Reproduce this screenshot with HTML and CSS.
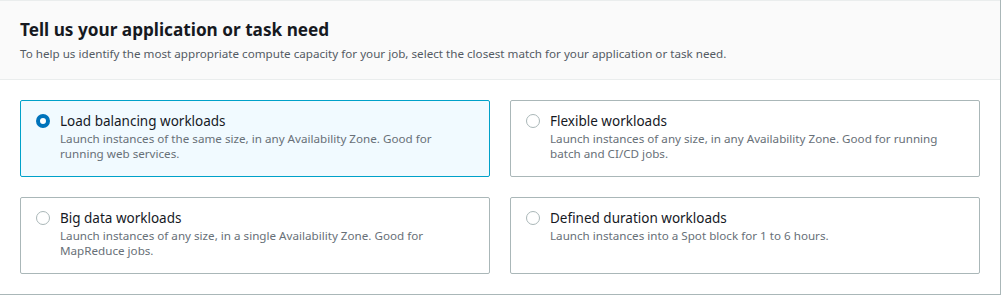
FILE: index.html
```html
<!DOCTYPE html>
<html lang="en">
<head>
<meta charset="UTF-8" />
<title>Application or task need</title>
<link rel="stylesheet" href="styles.css">
</head>
<body>
<div class="panel">
  <div class="panel-header">
    <h2 class="panel-title">Tell us your application or task need</h2>
    <p class="panel-desc">To help us identify the most appropriate compute capacity for your job, select the closest match for your application or task need.</p>
  </div>

  <div class="tiles">
    <label class="tile selected">
      <span class="radio checked"></span>
      <span class="tile-text">
        <span class="tile-title">Load balancing workloads</span>
        <span class="tile-desc">Launch instances of the same size, in any Availability Zone. Good for running web services.</span>
      </span>
    </label>
    <label class="tile">
      <span class="radio"></span>
      <span class="tile-text">
        <span class="tile-title">Flexible workloads</span>
        <span class="tile-desc">Launch instances of any size, in any Availability Zone. Good for running batch and CI/CD jobs.</span>
      </span>
    </label>
    <label class="tile">
      <span class="radio"></span>
      <span class="tile-text">
        <span class="tile-title">Big data workloads</span>
        <span class="tile-desc">Launch instances of any size, in a single Availability Zone. Good for MapReduce jobs.</span>
      </span>
    </label>
    <label class="tile">
      <span class="radio"></span>
      <span class="tile-text">
        <span class="tile-title">Defined duration workloads</span>
        <span class="tile-desc">Launch instances into a Spot block for 1 to 6 hours.</span>
      </span>
    </label>
  </div>
</div>
</body>
</html>
```

FILE: styles.css
```css
body {
  margin: 0;
  background-color: #fff;
  font-family: 'Noto Sans', 'Open Sans', sans-serif;
  color: #16191f;
}

.panel {
  width: 1001px;
  height: 295px;
  box-sizing: border-box;
  border-right: 1px solid #aab7b8;
  border-bottom: 1px solid #aab7b8;
  background-color: #fff;
}

.panel-header {
  background-color: #fafafa;
  border-top: 1px solid #eaeded;
  border-bottom: 1px solid #eaeded;
  padding: 18px 20px 0 20px;
  box-sizing: border-box;
  height: 80px;
}

.panel-title {
  margin: 0;
  font-size: 17.2px;
  line-height: 22px;
  font-weight: 700;
  color: #16191f;
}

.panel-desc {
  margin: 5px 0 0 0;
  font-size: 11.65px;
  line-height: 16px;
  color: #545b64;
}

.tiles {
  display: grid;
  grid-template-columns: 470px 470px;
  grid-auto-rows: 77px;
  column-gap: 20px;
  row-gap: 20px;
  padding: 20px 20px 0 20px;
}

.tile {
  display: flex;
  align-items: flex-start;
  gap: 10px;
  box-sizing: border-box;
  border: 1px solid #aab7b8;
  border-radius: 2px;
  padding: 11px 29px 0 15px;
  cursor: pointer;
}

.tile.selected {
  border-color: #00a1c9;
  background-color: #f1faff;
}

.radio {
  flex: none;
  width: 14px;
  height: 14px;
  margin-top: 2px;
  box-sizing: border-box;
  border: 1px solid #aab7b8;
  border-radius: 50%;
  background-color: #fff;
}

.radio.checked {
  border: 4px solid #0073bb;
}

.tile-text {
  display: flex;
  flex-direction: column;
}

.tile-title {
  font-size: 13.5px;
  line-height: 18px;
  color: #16191f;
}

.tile-desc {
  margin-top: 1px;
  font-size: 11.65px;
  line-height: 15px;
  color: #687078;
}
```
